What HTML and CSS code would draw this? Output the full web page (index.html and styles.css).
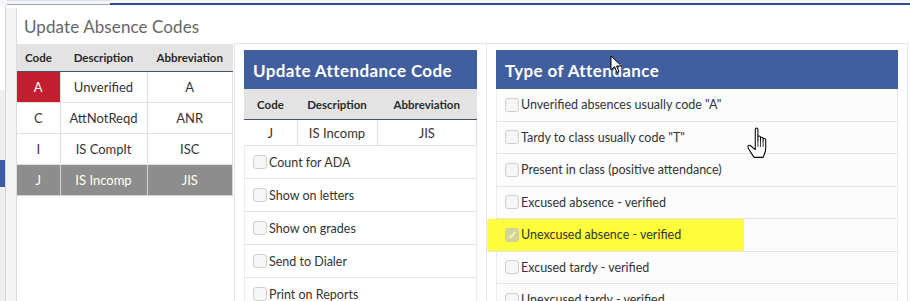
FILE: index.html
```html
<!DOCTYPE html>
<html lang="en">
<head>
    <meta charset="UTF-8">
    <title>Update Absence Codes</title>
    <link rel="stylesheet" href="styles.css">
</head>
<body>

<div class="topbar"><div class="tab"></div><div class="line"></div></div>

<div class="shell">
    <div class="sidebar">
        <div class="rail"><div class="marker"></div></div>
        <div class="gutter"></div>
    </div>

    <div class="window">
        <h1 class="title">Update Absence Codes</h1>

        <div class="content">
            <!-- list of codes -->
            <table class="codes">
                <tr>
                    <th class="c-code">Code</th>
                    <th class="c-desc">Description</th>
                    <th>Abbreviation</th>
                </tr>
                <tr>
                    <td class="red">A</td>
                    <td>Unverified</td>
                    <td>A</td>
                </tr>
                <tr>
                    <td>C</td>
                    <td>AttNotReqd</td>
                    <td>ANR</td>
                </tr>
                <tr>
                    <td>I</td>
                    <td>IS Complt</td>
                    <td>ISC</td>
                </tr>
                <tr class="selected">
                    <td>J</td>
                    <td>IS Incomp</td>
                    <td>JIS</td>
                </tr>
            </table>

            <!-- edit selected code -->
            <div class="box box-mid">
                <div class="box-head">Update Attendance Code</div>
                <table class="codes small">
                    <tr>
                        <th class="m-code">Code</th>
                        <th class="m-desc">Description</th>
                        <th>Abbreviation</th>
                    </tr>
                    <tr>
                        <td>J</td>
                        <td>IS Incomp</td>
                        <td>JIS</td>
                    </tr>
                </table>
                <ul class="checks">
                    <li><span class="box-check"></span>Count for ADA</li>
                    <li><span class="box-check"></span>Show on letters</li>
                    <li><span class="box-check"></span>Show on grades</li>
                    <li><span class="box-check"></span>Send to Dialer</li>
                    <li><span class="box-check"></span>Print on Reports</li>
                </ul>
            </div>

            <div class="box box-right">
                <div class="box-head">Type of Attendance</div>
                <ul class="checks types">
                    <li><span class="box-check"></span>Unverified absences usually code "A"</li>
                    <li><span class="box-check"></span>Tardy to class usually code "T"</li>
                    <li><span class="box-check"></span>Present in class (positive attendance)</li>
                    <li><span class="box-check"></span>Excused absence - verified</li>
                    <li class="marked"><span class="box-check checked">&#10003;</span>Unexcused absence - verified</li>
                    <li><span class="box-check"></span>Excused tardy - verified</li>
                    <li><span class="box-check"></span>Unexcused tardy - verified</li>
                </ul>
            </div>
        </div>
    </div>
</div>

<!-- mouse pointers captured in the screenshot -->
<svg class="cursor-arrow" width="14" height="20" viewBox="0 0 14 20">
    <path d="M1 1 L1 15 L4.5 11.5 L7 17.5 L9 16.6 L6.6 11 L11.5 11 Z" fill="#fff" stroke="#000" stroke-width="1"/>
</svg>
<svg class="cursor-hand" width="29" height="34" viewBox="0 0 22 26">
    <path d="M7 2.5 C7 1.2 9 1.2 9 2.5 L9 11 L9 8.5 C9 7.3 11 7.3 11 8.5 L11 11 L11 9.5 C11 8.3 13 8.3 13 9.5 L13 11.5 L13 10.5 C13 9.3 15 9.3 15 10.5 L15 17 C15 20 13.5 22.5 13 24 L6 24 C5 22 2 18 1.5 16.5 C1 15 2.6 14.2 3.6 15.3 L7 18 Z" fill="#fff" stroke="#000" stroke-width="0.8" stroke-linejoin="round"/>
    <path d="M9 11 L9 16 M11 11 L11 16 M13 11.5 L13 16" stroke="#000" stroke-width="0.6"/>
</svg>

</body>
</html>
```

FILE: styles.css
```css
body {
    margin: 0;
    width: 910px;
    height: 301px;
    overflow: hidden;
    background-color: #fff;
    font-family: 'Lato', 'Open Sans', sans-serif;
    color: #333;
    position: relative;
}

.topbar {
    display: flex;
    align-items: flex-end;
    height: 5px;
    background-color: #f6f6f8;
}

.tab {
    width: 103px;
    height: 3px;
    margin-left: 7px;
    border-top: 1px solid #dde;
    border-bottom: 1px solid #9aa6cc;
    background-color: #f3f4f6;
}

.line {
    flex: 1;
    height: 2px;
    background-color: #2f4a9c;
}

.shell {
    display: flex;
    height: 296px;
}

.sidebar {
    display: flex;
    width: 16px;
}

.rail {
    width: 5px;
    border-right: 1px solid #d6d6d6;
    background: linear-gradient(#fff 85px, #eeeeee 85px);
}

.marker {
    height: 27px;
    margin-top: 155px;
    background-color: #3b5ba8;
}

.gutter {
    flex: 1;
    margin-top: 3px;
    background-color: #f4f4f4;
}

.window {
    flex: 1;
    border-left: 1px solid #dcdcdc;
    margin-top: 3px;
}

.title {
    margin: 0;
    height: 35px;
    padding-left: 7px;
    font-size: 17px;
    font-weight: normal;
    line-height: 38px;
    color: #666;
    letter-spacing: 0.1px;
}

.content {
    display: flex;
    align-items: flex-start;
}

table.codes {
    border-collapse: collapse;
    font-size: 13px;
    text-align: center;
}

.content > table.codes {
    width: 216px;
    margin-top: 1px;
}

.codes th {
    height: 27px;
    padding: 0;
    background-color: #e3e3e3;
    border-bottom: 1px solid #44506c;
    font-size: 11.5px;
    font-weight: bold;
    color: #2a2a2a;
}

.codes td {
    height: 30px;
    padding: 0;
    border: 1px solid #e0e0e0;
    border-top: none;
}

.codes td:first-child {
    border-left: none;
}

.c-code {
    width: 43px;
}

.c-desc {
    width: 87px;
}

.codes td.red {
    background-color: #c11f2f;
    color: #fff;
}

.codes tr.selected td {
    background-color: #8d8d8d;
    color: #fff;
    border-color: #d5d5d5;
}

.box {
    height: 260px;
    padding: 6px 9px 0;
    border: 1px solid #e6e6e8;
    border-bottom: none;
    background-color: #fff;
}

.box-mid {
    width: 233px;
    margin-left: 1px;
    border-right: none;
}

.box-right {
    width: 402px;
}

.box-head {
    height: 39px;
    padding-left: 9px;
    background-color: #415e9e;
    color: #fff;
    font-size: 17px;
    font-weight: bold;
    letter-spacing: 0.4px;
    line-height: 41px;
}

.small {
    width: 100%;
}

.small th {
    height: 30px;
}

.small td {
    height: 25px;
    line-height: 16px;
}

.m-code {
    width: 53px;
}

.m-desc {
    width: 80px;
}

.checks {
    list-style: none;
    margin: 0;
    padding: 0;
    font-size: 12.5px;
}

.checks li {
    display: flex;
    align-items: center;
    height: 32px;
    padding-left: 8px;
    border-bottom: 1px solid #e4e4e4;
    border-right: 1px solid #ececec;
    border-left: 1px solid #ececec;
}

.types li {
    background-color: #fcfcfc;
    height: 31.5px;
}

.box-check {
    width: 12px;
    height: 12px;
    margin-right: 2px;
    border: 1px solid #d0d0d0;
    border-radius: 3px;
    background-color: #f6f6f6;
    font-size: 11px;
    font-weight: bold;
    line-height: 12px;
    text-align: center;
    color: #f4f4c8;
}

.box-check.checked {
    background-color: #d4d49a;
    border-color: #cfcf90;
}

.checks li.marked {
    margin-left: -9px;
    padding-left: 17px;
    background: linear-gradient(90deg, #fdfd3c 256px, #fcfcfc 256px);
}

.cursor-arrow {
    position: absolute;
    left: 610px;
    top: 55px;
}

.cursor-hand {
    position: absolute;
    left: 746px;
    top: 126px;
}
```
